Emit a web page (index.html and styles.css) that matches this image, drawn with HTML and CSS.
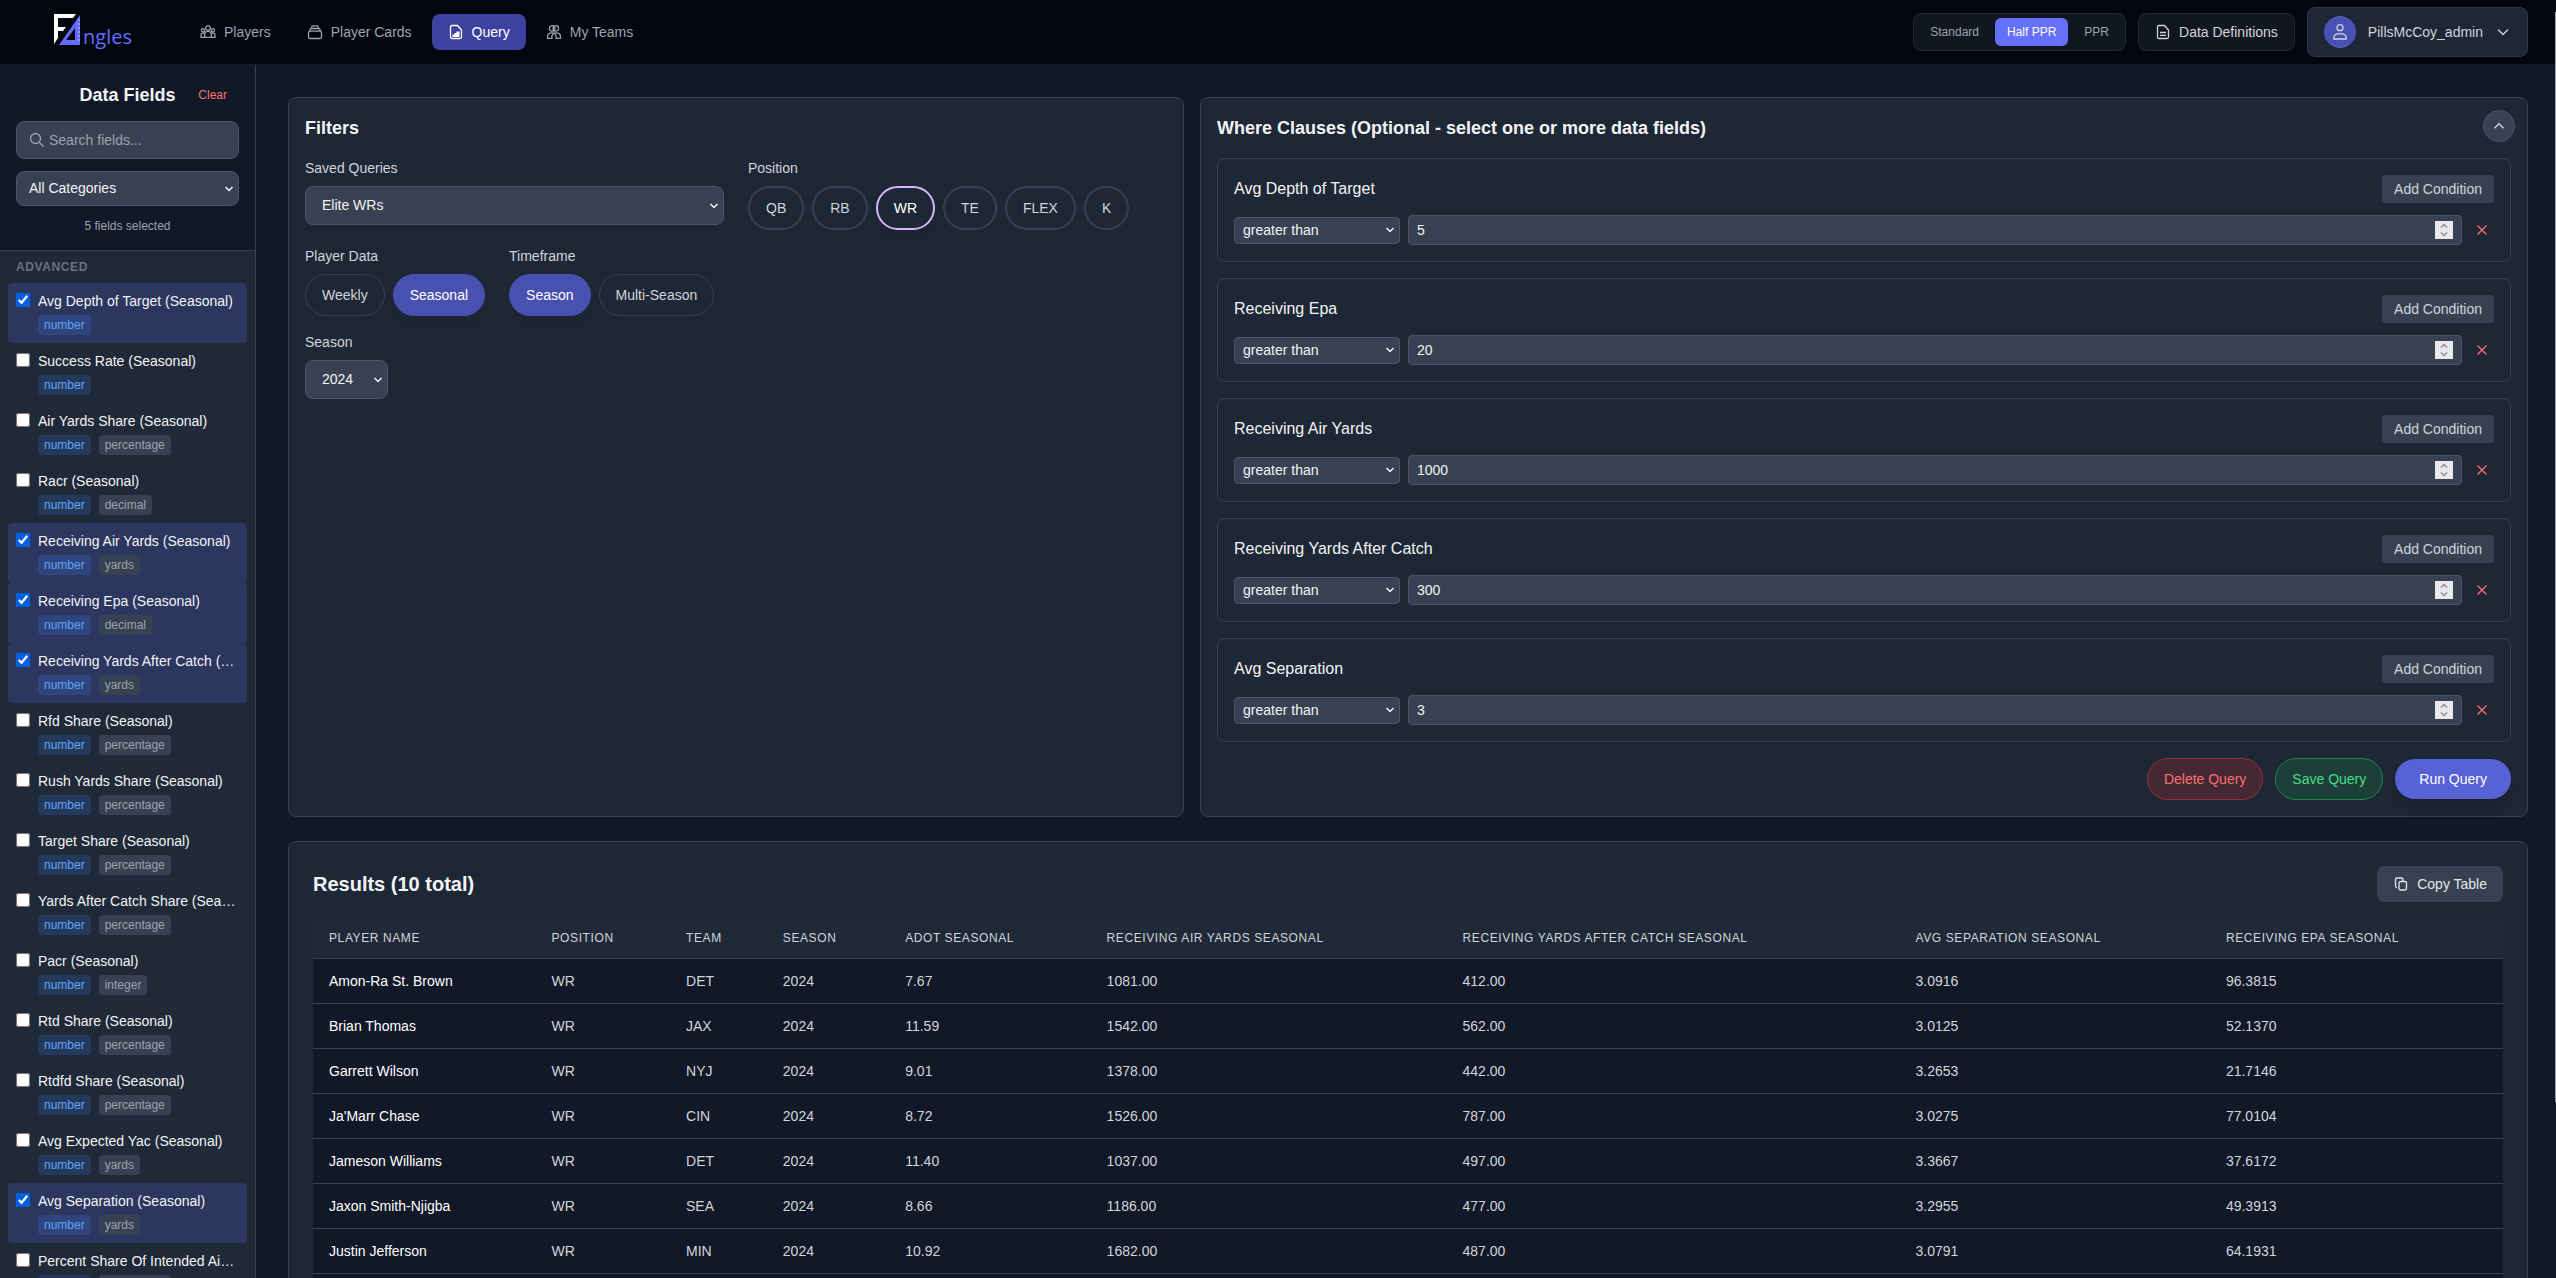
FILE: index.html
```html
<!DOCTYPE html>
<html lang="en">
  <head>
    <meta charset="UTF-8" />
    <meta name="viewport" content="width=device-width, initial-scale=1.0" />
    <title>FAngles - Query</title>
    <link rel="stylesheet" href="styles.css">
  </head>
  <body>
    <header class="topbar">
      <a href="#" class="logo" aria-label="FAngles">
        <svg width="78" height="40" viewBox="0 0 78 40">
          <path fill="#fff" d="M0 2h22l-3 4H4v9h8l-3 4H4v7L0 32z" />
          <path fill="#646cff" fill-rule="evenodd" d="M26 3v30H5zM21 16v12h-9z" />
          <path stroke="#c3c7ff" d="M24 8h2M24 12h2M24 16h2M24 20h2M24 24h2M24 28h2" />
          <text x="29" y="32" class="logo-text">ngles</text>
        </svg>
      </a>
      <nav class="nav">
        <a href="#" class="nav-link">
          <svg class="icon" viewBox="0 0 16 16"><circle cx="8" cy="4" r="2.3" /><circle cx="3" cy="6.2" r="1.6" /><circle cx="13" cy="6.2" r="1.6" /><path d="M4.6 13.4v-2.6a3.4 3.4 0 0 1 6.8 0v2.6zM4.6 13.4H1v-2.2a2.2 2.2 0 0 1 3.6-1.7M11.4 13.4H15v-2.2a2.2 2.2 0 0 0-3.6-1.7" /></svg>
          Players
        </a>
        <a href="#" class="nav-link">
          <svg class="icon" viewBox="0 0 16 16"><rect x="1.5" y="7.2" width="13" height="7.3" rx="1.5" /><path d="M3 7V5.6c0-.7.5-1.1 1.1-1.1h7.8c.6 0 1.1.4 1.1 1.1V7M4.8 4.5V3c0-.7.5-1.2 1.1-1.2h4.2c.6 0 1.1.5 1.1 1.2v1.5" /></svg>
          Player Cards
        </a>
        <a href="#" class="nav-link active">
          <svg class="icon" viewBox="0 0 16 16"><path d="M4 1.5h5.5L13.5 6v7a1.5 1.5 0 0 1-1.5 1.5H4A1.5 1.5 0 0 1 2.5 13V3A1.5 1.5 0 0 1 4 1.5z" /><path class="solid" d="M4.5 13v-2.5h2V9h2V7.500h3V13z" /></svg>
          Query
        </a>
        <a href="#" class="nav-link">
          <svg class="icon" viewBox="0 0 16 16"><circle cx="6.2" cy="4.4" r="2.8" /><circle cx="9.8" cy="4.4" r="2.8" /><path d="M1.5 14.3v-1.5c0-2.4 1.8-4 4.2-4s4.4 1.6 4.4 4v1.5h4.400v-1.500c0-2.400-1.800-4-4.200-4s-4.400 1.600-4.400 4v1.500z" /></svg>
          My Teams
        </a>
      </nav>
      <div class="topbar-right">
        <div class="scoring">
          <button type="button">Standard</button>
          <button type="button" class="active">Half PPR</button>
          <button type="button">PPR</button>
        </div>
        <button type="button" class="definitions">
          <svg class="icon" viewBox="0 0 16 16"><path d="M4 1.5h5.5L13.5 6v7a1.5 1.5 0 0 1-1.5 1.5H4A1.5 1.5 0 0 1 2.5 13V3A1.5 1.5 0 0 1 4 1.5zM5 8.5h6M5 11.3h6" /></svg>
          Data Definitions
        </button>
        <button type="button" class="user-menu">
          <span class="avatar"><svg class="icon" viewBox="0 0 16 16"><circle cx="8" cy="3.7" r="3" /><path d="M1.8 15v-1.2a4 4 0 0 1 4-4h4.4a4 4 0 0 1 4 4V15z" /></svg></span>
          PillsMcCoy_admin
          <svg class="icon" viewBox="0 0 16 16"><path d="M3 5.5l5 5 5-5" /></svg>
        </button>
      </div>
    </header>

    <div class="layout">
      <aside class="sidebar">
        <div class="sidebar-head">
          <div class="sidebar-title">
            <h2>Data Fields</h2>
            <button type="button" class="clear">Clear</button>
          </div>
          <div class="search">
            <svg class="icon" viewBox="0 0 16 16"><circle cx="6.5" cy="6.5" r="5" /><path d="M10.2 10.2l4.3 4.3" /></svg>
            <input type="text" placeholder="Search fields..." aria-label="Search fields">
          </div>
          <select class="select category" aria-label="Category"><option>All Categories</option></select>
          <p class="count">5 fields selected</p>
        </div>
        <div class="fields">
          <h3>Advanced</h3>
          <label class="field selected"><input type="checkbox" checked><span class="field-body"><span class="field-name">Avg Depth of Target (Seasonal)</span><span class="tags"><span class="tag type">number</span></span></span></label>
          <label class="field"><input type="checkbox"><span class="field-body"><span class="field-name">Success Rate (Seasonal)</span><span class="tags"><span class="tag type">number</span></span></span></label>
          <label class="field"><input type="checkbox"><span class="field-body"><span class="field-name">Air Yards Share (Seasonal)</span><span class="tags"><span class="tag type">number</span><span class="tag">percentage</span></span></span></label>
          <label class="field"><input type="checkbox"><span class="field-body"><span class="field-name">Racr (Seasonal)</span><span class="tags"><span class="tag type">number</span><span class="tag">decimal</span></span></span></label>
          <label class="field selected"><input type="checkbox" checked><span class="field-body"><span class="field-name">Receiving Air Yards (Seasonal)</span><span class="tags"><span class="tag type">number</span><span class="tag">yards</span></span></span></label>
          <label class="field selected"><input type="checkbox" checked><span class="field-body"><span class="field-name">Receiving Epa (Seasonal)</span><span class="tags"><span class="tag type">number</span><span class="tag">decimal</span></span></span></label>
          <label class="field selected"><input type="checkbox" checked><span class="field-body"><span class="field-name">Receiving Yards After Catch (Seasonal)</span><span class="tags"><span class="tag type">number</span><span class="tag">yards</span></span></span></label>
          <label class="field"><input type="checkbox"><span class="field-body"><span class="field-name">Rfd Share (Seasonal)</span><span class="tags"><span class="tag type">number</span><span class="tag">percentage</span></span></span></label>
          <label class="field"><input type="checkbox"><span class="field-body"><span class="field-name">Rush Yards Share (Seasonal)</span><span class="tags"><span class="tag type">number</span><span class="tag">percentage</span></span></span></label>
          <label class="field"><input type="checkbox"><span class="field-body"><span class="field-name">Target Share (Seasonal)</span><span class="tags"><span class="tag type">number</span><span class="tag">percentage</span></span></span></label>
          <label class="field"><input type="checkbox"><span class="field-body"><span class="field-name">Yards After Catch Share (Seasonal)</span><span class="tags"><span class="tag type">number</span><span class="tag">percentage</span></span></span></label>
          <label class="field"><input type="checkbox"><span class="field-body"><span class="field-name">Pacr (Seasonal)</span><span class="tags"><span class="tag type">number</span><span class="tag">integer</span></span></span></label>
          <label class="field"><input type="checkbox"><span class="field-body"><span class="field-name">Rtd Share (Seasonal)</span><span class="tags"><span class="tag type">number</span><span class="tag">percentage</span></span></span></label>
          <label class="field"><input type="checkbox"><span class="field-body"><span class="field-name">Rtdfd Share (Seasonal)</span><span class="tags"><span class="tag type">number</span><span class="tag">percentage</span></span></span></label>
          <label class="field"><input type="checkbox"><span class="field-body"><span class="field-name">Avg Expected Yac (Seasonal)</span><span class="tags"><span class="tag type">number</span><span class="tag">yards</span></span></span></label>
          <label class="field selected"><input type="checkbox" checked><span class="field-body"><span class="field-name">Avg Separation (Seasonal)</span><span class="tags"><span class="tag type">number</span><span class="tag">yards</span></span></span></label>
          <label class="field"><input type="checkbox"><span class="field-body"><span class="field-name">Percent Share Of Intended Air Yards (Seasonal)</span><span class="tags"><span class="tag type">number</span><span class="tag">percentage</span></span></span></label>
        </div>
      </aside>

      <main class="content">
        <div class="panels">
          <section class="card filters">
            <h2>Filters</h2>
            <div class="filter-grid">
              <div class="group">
                <label for="savedQueries">Saved Queries</label>
                <select id="savedQueries" class="select"><option>Elite WRs</option></select>
              </div>
              <div class="group">
                <span class="label">Position</span>
                <div class="pills positions">
                  <button type="button">QB</button>
                  <button type="button">RB</button>
                  <button type="button" class="active">WR</button>
                  <button type="button">TE</button>
                  <button type="button">FLEX</button>
                  <button type="button">K</button>
                </div>
              </div>
            </div>
            <div class="filter-row">
              <div class="group">
                <span class="label">Player Data</span>
                <div class="pills">
                  <button type="button">Weekly</button>
                  <button type="button" class="active">Seasonal</button>
                </div>
              </div>
              <div class="group">
                <span class="label">Timeframe</span>
                <div class="pills">
                  <button type="button" class="active">Season</button>
                  <button type="button">Multi-Season</button>
                </div>
              </div>
            </div>
            <div class="filter-row">
              <div class="group">
                <label for="season">Season</label>
                <select id="season" class="select season"><option>2024</option></select>
              </div>
            </div>
          </section>

          <section class="card where">
            <h2>Where Clauses (Optional - select one or more data fields)</h2>
            <button type="button" class="collapse" aria-label="Collapse"><svg class="icon" viewBox="0 0 16 16"><path d="M3.5 10.2L8 5.7l4.5 4.5" /></svg></button>
            <div class="clauses">
              <div class="clause">
                <div class="clause-head"><h3>Avg Depth of Target</h3><button type="button">Add Condition</button></div>
                <div class="condition">
                  <select class="select operator" aria-label="Operator"><option>greater than</option></select>
                  <input type="number" value="5" aria-label="Avg Depth of Target value">
                  <button type="button" class="remove" aria-label="Remove"><svg class="icon" viewBox="0 0 16 16"><path d="M3.5 3.5l9 9M12.5 3.5l-9 9" /></svg></button>
                </div>
              </div>
              <div class="clause">
                <div class="clause-head"><h3>Receiving Epa</h3><button type="button">Add Condition</button></div>
                <div class="condition">
                  <select class="select operator" aria-label="Operator"><option>greater than</option></select>
                  <input type="number" value="20" aria-label="Receiving Epa value">
                  <button type="button" class="remove" aria-label="Remove"><svg class="icon" viewBox="0 0 16 16"><path d="M3.5 3.5l9 9M12.5 3.5l-9 9" /></svg></button>
                </div>
              </div>
              <div class="clause">
                <div class="clause-head"><h3>Receiving Air Yards</h3><button type="button">Add Condition</button></div>
                <div class="condition">
                  <select class="select operator" aria-label="Operator"><option>greater than</option></select>
                  <input type="number" value="1000" aria-label="Receiving Air Yards value">
                  <button type="button" class="remove" aria-label="Remove"><svg class="icon" viewBox="0 0 16 16"><path d="M3.5 3.5l9 9M12.5 3.5l-9 9" /></svg></button>
                </div>
              </div>
              <div class="clause">
                <div class="clause-head"><h3>Receiving Yards After Catch</h3><button type="button">Add Condition</button></div>
                <div class="condition">
                  <select class="select operator" aria-label="Operator"><option>greater than</option></select>
                  <input type="number" value="300" aria-label="Receiving Yards After Catch value">
                  <button type="button" class="remove" aria-label="Remove"><svg class="icon" viewBox="0 0 16 16"><path d="M3.5 3.5l9 9M12.5 3.5l-9 9" /></svg></button>
                </div>
              </div>
              <div class="clause">
                <div class="clause-head"><h3>Avg Separation</h3><button type="button">Add Condition</button></div>
                <div class="condition">
                  <select class="select operator" aria-label="Operator"><option>greater than</option></select>
                  <input type="number" value="3" aria-label="Avg Separation value">
                  <button type="button" class="remove" aria-label="Remove"><svg class="icon" viewBox="0 0 16 16"><path d="M3.5 3.5l9 9M12.5 3.5l-9 9" /></svg></button>
                </div>
              </div>
            </div>
            <div class="actions">
              <button type="button" class="delete">Delete Query</button>
              <button type="button" class="save">Save Query</button>
              <button type="button" class="run">Run Query</button>
            </div>
          </section>
        </div>

        <section class="card results">
          <div class="results-head">
            <h2>Results (10 total)</h2>
            <button type="button" class="copy">
              <svg class="icon" viewBox="0 0 16 16"><rect x="6" y="5.5" width="7.5" height="8.5" rx="1.5" /><path d="M4 11.5A1.5 1.5 0 0 1 2.500 10V3.500A1.500 1.500 0 0 1 4 2h4.500A1.500 1.500 0 0 1 10 3.500V5" /></svg>
              Copy Table
            </button>
          </div>
          <table>
            <thead>
              <tr><th>Player Name</th><th>Position</th><th>Team</th><th>Season</th><th>aDOT Seasonal</th><th>Receiving Air Yards Seasonal</th><th>Receiving Yards After Catch Seasonal</th><th>Avg Separation Seasonal</th><th>Receiving Epa Seasonal</th></tr>
            </thead>
            <tbody>
              <tr><td>Amon-Ra St. Brown</td><td>WR</td><td>DET</td><td>2024</td><td>7.67</td><td>1081.00</td><td>412.00</td><td>3.0916</td><td>96.3815</td></tr>
              <tr><td>Brian Thomas</td><td>WR</td><td>JAX</td><td>2024</td><td>11.59</td><td>1542.00</td><td>562.00</td><td>3.0125</td><td>52.1370</td></tr>
              <tr><td>Garrett Wilson</td><td>WR</td><td>NYJ</td><td>2024</td><td>9.01</td><td>1378.00</td><td>442.00</td><td>3.2653</td><td>21.7146</td></tr>
              <tr><td>Ja'Marr Chase</td><td>WR</td><td>CIN</td><td>2024</td><td>8.72</td><td>1526.00</td><td>787.00</td><td>3.0275</td><td>77.0104</td></tr>
              <tr><td>Jameson Williams</td><td>WR</td><td>DET</td><td>2024</td><td>11.40</td><td>1037.00</td><td>497.00</td><td>3.3667</td><td>37.6172</td></tr>
              <tr><td>Jaxon Smith-Njigba</td><td>WR</td><td>SEA</td><td>2024</td><td>8.66</td><td>1186.00</td><td>477.00</td><td>3.2955</td><td>49.3913</td></tr>
              <tr><td>Justin Jefferson</td><td>WR</td><td>MIN</td><td>2024</td><td>10.92</td><td>1682.00</td><td>487.00</td><td>3.0791</td><td>64.1931</td></tr>
              <tr><td colspan="9">&nbsp;</td></tr>
            </tbody>
          </table>
        </section>
      </main>
    </div>
    <div class="scroll-thumb"></div>
  </body>
</html>
```
FILE: styles.css
```css
:root {
  --accent: #646cff;
  --page: #111827;
  --panel: #1f2937;
  --card: #1e2735;
  --control: #374151;
  --line: #374151;
  --line-light: #4b5563;
  --text: #f3f4f6;
  --text-soft: #d1d5db;
  --text-muted: #9ca3af;
}

* {
  box-sizing: border-box;
}

body {
  margin: 0;
  height: 100vh;
  overflow: hidden;
  display: flex;
  flex-direction: column;
  font-family: "Liberation Sans", Arial, sans-serif;
  font-size: 14px;
  line-height: 20px;
  background: var(--page);
  color: var(--text);
}

h2, h3, p {
  margin: 0;
}

h2 {
  font-size: 18px;
  line-height: 28px;
}

button {
  font: inherit;
  color: var(--text-soft);
  background: none;
  border: none;
  padding: 0;
  white-space: nowrap;
  cursor: pointer;
}

input, select {
  font: inherit;
  color: var(--text);
}

.icon {
  width: 16px;
  height: 16px;
  flex: none;
  fill: none;
  stroke: currentColor;
  stroke-width: 1.3;
}

.icon .solid {
  fill: currentColor;
  stroke: none;
}

/* top bar */
.topbar {
  flex: none;
  display: flex;
  align-items: center;
  height: 65px;
  padding: 0 28px 0 54px;
  background: #02060f;
  border-bottom: 1px solid #111827;
}

.logo {
  display: flex;
}

.logo-text {
  font-family: "Open Sans", sans-serif;
  font-size: 20px;
  fill: var(--accent);
}

.nav {
  display: flex;
  gap: 4px;
  margin-left: 52px;
}

.nav-link {
  display: flex;
  align-items: center;
  gap: 8px;
  padding: 8px 16px;
  border-radius: 8px;
  color: var(--text-muted);
  text-decoration: none;
}

.nav-link.active {
  background: rgba(100, 108, 255, 0.6);
  color: #fff;
}

.topbar-right {
  display: flex;
  align-items: center;
  gap: 12px;
  margin-left: auto;
}

.scoring {
  display: flex;
  gap: 4px;
  padding: 4px;
  border: 1px solid var(--panel);
  border-radius: 8px;
  background: #111721;
}

.scoring button {
  padding: 6px 12px;
  border-radius: 6px;
  font-size: 12px;
  line-height: 16px;
  color: var(--text-muted);
}

.scoring button.active {
  background: #6671fb;
  color: #fff;
}

.definitions {
  display: flex;
  align-items: center;
  gap: 8px;
  padding: 8px 16px;
  border: 1px solid var(--panel);
  border-radius: 8px;
  background: #111721;
}

.user-menu {
  display: flex;
  align-items: center;
  gap: 12px;
  padding: 8px 16px;
  border: 1px solid #2d3748;
  border-radius: 8px;
  background: var(--card);
}

.avatar {
  display: flex;
  align-items: center;
  justify-content: center;
  width: 32px;
  height: 32px;
  border: 1px solid #5660c4;
  border-radius: 50%;
  background: #4851af;
}

/* sidebar */
.layout {
  flex: 1;
  min-height: 0;
  display: flex;
}

.sidebar {
  flex: none;
  width: 256px;
  display: flex;
  flex-direction: column;
  border-right: 1px solid var(--line);
  background: var(--panel);
}

.sidebar-head {
  display: flex;
  flex-direction: column;
  gap: 12px;
  padding: 16px;
  background: var(--page);
  border-bottom: 1px solid var(--line);
}

.sidebar-title {
  display: grid;
  grid-template-columns: 1fr auto 1fr;
  align-items: center;
}

.sidebar-title h2 {
  grid-column: 2;
}

.clear {
  justify-self: end;
  padding: 0 12px;
  font-size: 12px;
  line-height: 16px;
  color: #f87171;
}

.search {
  display: flex;
  align-items: center;
  gap: 4px;
  padding: 8px 12px;
  border: 1px solid var(--line-light);
  border-radius: 8px;
  background: var(--control);
  color: var(--text-muted);
}

.search input {
  flex: 1;
  min-width: 0;
  height: 20px;
  padding: 0;
  border: none;
  outline: none;
  background: none;
}

.search input::placeholder {
  color: var(--text-muted);
}

.select {
  appearance: none;
  padding: 10px 32px 10px 16px;
  border: 1px solid var(--line-light);
  border-radius: 8px;
  line-height: 17px;
  background: var(--control) url("data:image/svg+xml,%3Csvg xmlns='http://www.w3.org/2000/svg' width='10' height='8' fill='none' stroke='%23f3f4f6' stroke-width='1.5'%3E%3Cpath d='M1.5 2L5 5.5 8.5 2'/%3E%3C/svg%3E") no-repeat right 4px center;
}

.select.category {
  padding: 8px 24px 8px 12px;
}

.count {
  text-align: center;
  font-size: 12px;
  line-height: 16px;
  color: var(--text-muted);
}

.fields {
  flex: 1;
  min-height: 0;
  overflow: hidden;
  padding: 8px;
}

.fields h3 {
  padding: 0 8px;
  margin-bottom: 8px;
  font-size: 12px;
  line-height: 16px;
  letter-spacing: 0.05em;
  text-transform: uppercase;
  color: #6b7280;
}

.field {
  display: flex;
  align-items: flex-start;
  gap: 8px;
  padding: 8px 10px 8px 8px;
  border-radius: 4px;
}

.field.selected {
  background: rgba(100, 108, 255, 0.2);
}

.field input {
  flex: none;
  width: 14px;
  height: 14px;
  margin: 2px 0 0;
  accent-color: #0060df;
}

.field-body {
  flex: 1;
  min-width: 0;
}

.field-name {
  display: block;
  overflow: hidden;
  white-space: nowrap;
  text-overflow: ellipsis;
}

.tags {
  display: flex;
  gap: 8px;
  margin-top: 4px;
}

.tag {
  padding: 2px 6px;
  border-radius: 4px;
  font-size: 12px;
  line-height: 16px;
  background: var(--control);
  color: var(--text-muted);
}

.tag.type {
  background: rgba(59, 130, 246, 0.2);
  color: #60a5fa;
}

/* main area */
.content {
  flex: 1;
  min-width: 0;
  overflow: hidden;
  padding: 32px 28px 32px 32px;
}

.card {
  border: 1px solid var(--line);
  border-radius: 8px;
  background: var(--card);
}

.panels {
  display: grid;
  grid-template-columns: 40% 1fr;
  gap: 16px;
}

.filters,
.where {
  display: flex;
  flex-direction: column;
  gap: 16px;
  padding: 16px;
}

.where {
  position: relative;
}

.filter-grid {
  display: grid;
  grid-template-columns: 1fr 1fr;
  gap: 24px;
}

.filter-row {
  display: flex;
  gap: 24px;
}

.group {
  display: flex;
  flex-direction: column;
  gap: 8px;
  color: var(--text-soft);
}

.select.season {
  width: 83px;
}

.pills {
  display: flex;
  gap: 8px;
}

.pills button {
  padding: 10px 16px;
  border: 1px solid var(--line);
  border-radius: 9999px;
}

.pills button.active {
  background: #4851af;
  border-color: #4851af;
  color: #fff;
  box-shadow: 0 10px 15px -3px rgba(0, 0, 0, 0.1);
}

.positions button {
  border-width: 2px;
}

.positions button.active {
  background: none;
  border-color: #d8b4fe;
}

.collapse {
  position: absolute;
  top: 12px;
  right: 12px;
  display: flex;
  align-items: center;
  justify-content: center;
  width: 32px;
  height: 32px;
  border: 1px solid var(--line-light);
  border-radius: 50%;
  background: var(--control);
}

.clauses {
  display: flex;
  flex-direction: column;
  gap: 16px;
}

.clause {
  display: flex;
  flex-direction: column;
  gap: 12px;
  padding: 16px;
  border: 1px solid var(--line);
  border-radius: 8px;
}

.clause-head {
  display: flex;
  align-items: center;
  justify-content: space-between;
}

.clause-head h3 {
  font-size: 16px;
  font-weight: 400;
}

.clause-head button {
  padding: 4px 12px;
  border-radius: 4px;
  background: var(--control);
}

.condition {
  display: flex;
  align-items: center;
  gap: 8px;
}

.select.operator {
  width: 166px;
  padding: 4px 24px 4px 8px;
  border-radius: 4px;
}

.condition input {
  flex: 1;
  min-width: 0;
  height: 30px;
  padding: 4px 8px;
  border: 1px solid var(--line-light);
  border-radius: 4px;
  background: var(--control);
}

.condition input::-webkit-inner-spin-button {
  appearance: none;
  width: 18px;
  height: 18px;
  opacity: 1;
  background: #e9e9ed url("data:image/svg+xml,%3Csvg xmlns='http://www.w3.org/2000/svg' width='18' height='18' fill='none' stroke='%238f8f9d' stroke-width='1.5'%3E%3Cpath d='M6 6.5l3-3 3 3M6 11.5l3 3 3-3'/%3E%3C/svg%3E") no-repeat center;
}

.remove {
  display: flex;
  padding: 4px;
  color: #f87171;
}

.actions {
  display: flex;
  align-items: center;
  justify-content: flex-end;
  gap: 12px;
}

.actions button {
  padding: 10px 16px;
  border: 1px solid transparent;
  border-radius: 9999px;
}

.actions .delete {
  background: #452833;
  border-color: #9b2f37;
  color: #f87171;
}

.actions .save {
  background: #1d3f3a;
  border-color: #20854a;
  color: #4ade80;
}

.actions .run {
  padding: 10px 24px;
  border: none;
  background: #5662d6;
  color: #fff;
  box-shadow: 0 10px 15px -3px rgba(0, 0, 0, 0.2);
}

/* results */
.results {
  margin-top: 24px;
  padding: 24px;
}

.results-head {
  display: flex;
  align-items: center;
  justify-content: space-between;
  margin-bottom: 16px;
}

.results-head h2 {
  font-size: 20px;
}

.copy {
  display: flex;
  align-items: center;
  gap: 8px;
  padding: 8px 16px;
  border-radius: 8px;
  background: var(--control);
  color: #e5e7eb;
}

table {
  width: 100%;
  border-collapse: separate;
  border-spacing: 0;
}

th,
td {
  padding: 12px 16px;
  text-align: left;
  white-space: nowrap;
  border-bottom: 1px solid var(--line);
}

th {
  font-size: 12px;
  line-height: 16px;
  font-weight: 400;
  letter-spacing: 0.05em;
  text-transform: uppercase;
  background: var(--panel);
  color: var(--text-soft);
}

td {
  background: var(--page);
  color: var(--text-soft);
}

td:first-child {
  color: #fff;
}

.scroll-thumb {
  position: fixed;
  top: 12px;
  right: 0;
  width: 1px;
  height: 1090px;
  background: #9ca3af;
}
```
